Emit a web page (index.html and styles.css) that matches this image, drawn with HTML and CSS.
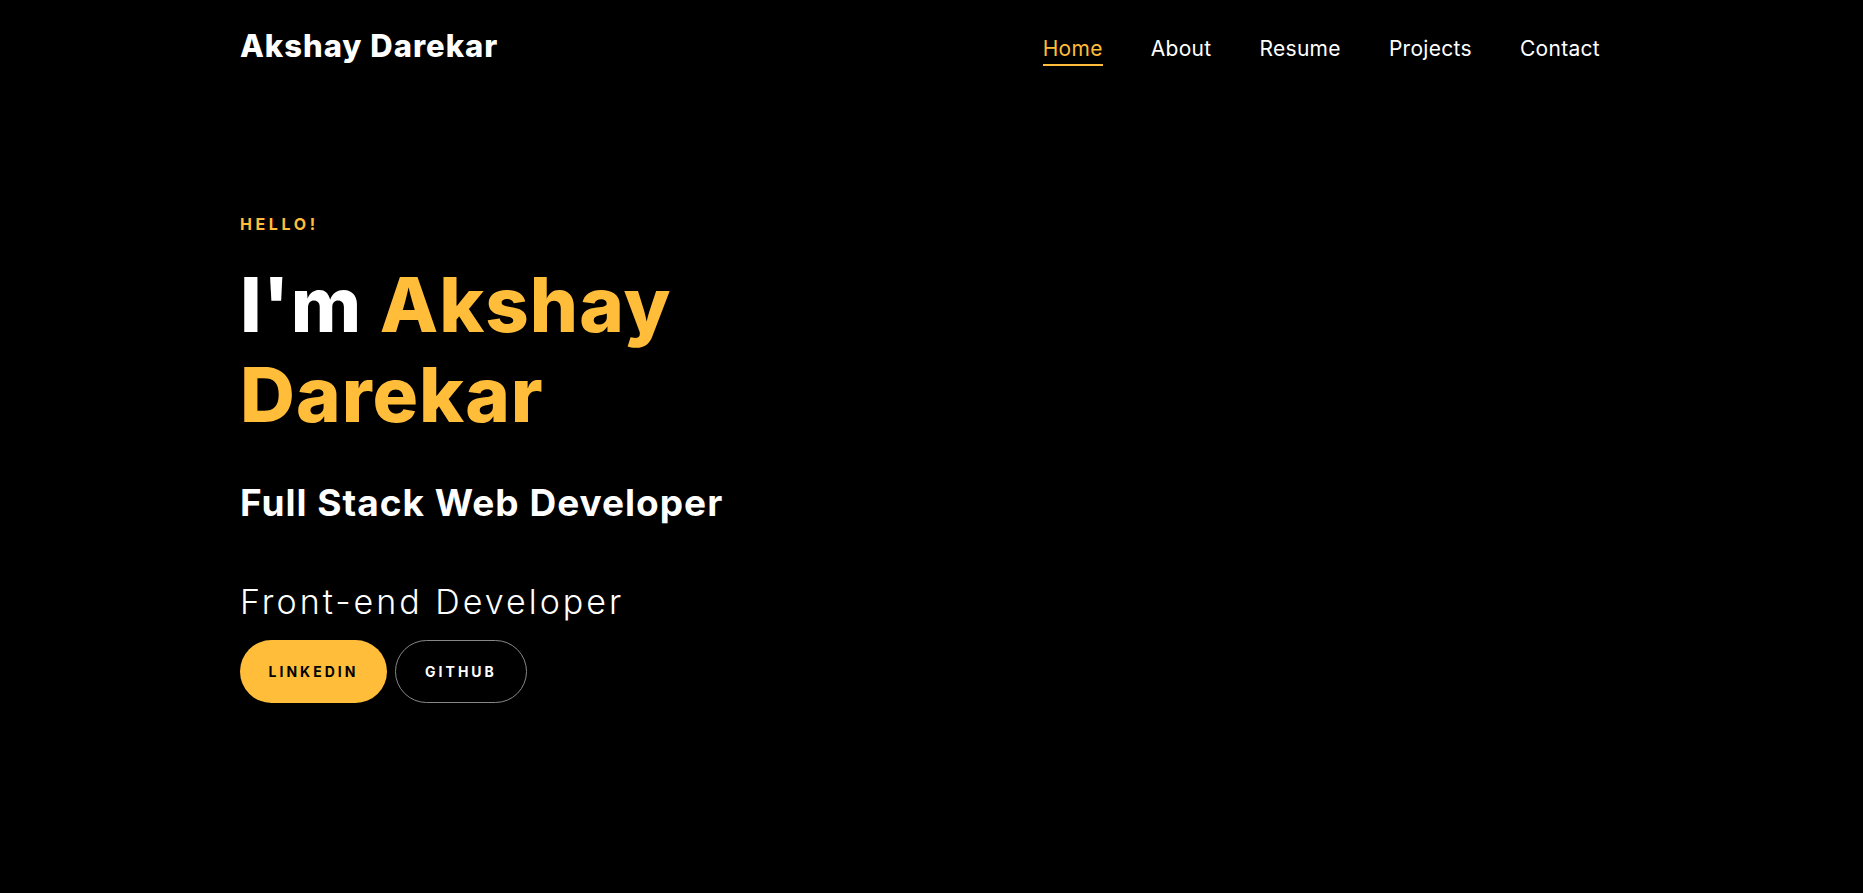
FILE: index.html
```html
<!DOCTYPE html>
<html lang="en">
<head>
<meta charset="utf-8">
<title>Akshay Darekar</title>
<link rel="stylesheet" href="styles.css">
</head>
<body>
<header class="topbar">
  <a class="brand" href="#">Akshay Darekar</a>
  <nav class="menu">
    <a class="menu-link active" href="#">Home</a>
    <a class="menu-link" href="#">About</a>
    <a class="menu-link" href="#">Resume</a>
    <a class="menu-link" href="#">Projects</a>
    <a class="menu-link" href="#">Contact</a>
  </nav>
</header>
<main class="hero">
  <p class="subheading">Hello!</p>
  <h1 class="title">I'm <span class="accent">Akshay<br>Darekar</span></h1>
  <h2 class="role">Full Stack Web Developer</h2>
  <p class="typed">Front-end Developer</p>
  <div class="actions">
    <a class="btn btn-primary" href="#">Linkedin</a>
    <a class="btn btn-outline" href="#">Github</a>
  </div>
</main>
</body>
</html>
```
FILE: styles.css
```css
html, body {
  margin: 0;
  padding: 0;
  background: #000;
  height: 100%;
}
body {
  font-family: "Inter", "Open Sans", sans-serif;
  color: #fff;
}
a { text-decoration: none; color: inherit; }

.topbar {
  display: flex;
  justify-content: space-between;
  align-items: flex-start;
  height: 68px;
  box-sizing: border-box;
  padding: 24px 263px 0 240px;
}
.brand {
  font-size: 31px;
  font-weight: 800;
  line-height: 44px;
  letter-spacing: 1px;
  color: #fff;
}
.menu {
  display: flex;
  gap: 48px;
  padding-top: 11px;
}
.menu-link {
  font-size: 21px;
  font-weight: 400;
  line-height: 28px;
  letter-spacing: 0.3px;
  padding-bottom: 1px;
  border-bottom: 2px solid transparent;
}
.menu-link.active {
  color: #ffbd39;
  border-bottom-color: #ffbd39;
}

.hero {
  padding: 146px 0 0 240px;
}
.subheading {
  margin: 0;
  color: #ffbd39;
  font-size: 16px;
  font-weight: 700;
  letter-spacing: 3.6px;
  text-transform: uppercase;
  line-height: 20px;
}
.title {
  margin: 25px 0 0;
  font-size: 76px;
  font-weight: 800;
  line-height: 90px;
  letter-spacing: 1px;
}
.accent { color: #ffbd39; }
.role {
  margin: 40px 0 0;
  font-size: 37px;
  font-weight: 700;
  line-height: 48px;
  letter-spacing: 1px;
}
.typed {
  margin: 53px 0 0;
  font-size: 34px;
  font-weight: 300;
  line-height: 44px;
  letter-spacing: 3px;
}
.actions {
  display: flex;
  gap: 8px;
  margin-top: 16px;
}
.btn {
  display: inline-flex;
  align-items: center;
  justify-content: center;
  height: 63px;
  box-sizing: border-box;
  border-radius: 32px;
  font-size: 14px;
  font-weight: 700;
  letter-spacing: 3px;
  text-transform: uppercase;
}
.btn-primary {
  width: 147px;
  background: #ffbd39;
  color: #000;
}
.btn-outline {
  width: 132px;
  border: 1px solid #888;
  color: #fff;
}
```
